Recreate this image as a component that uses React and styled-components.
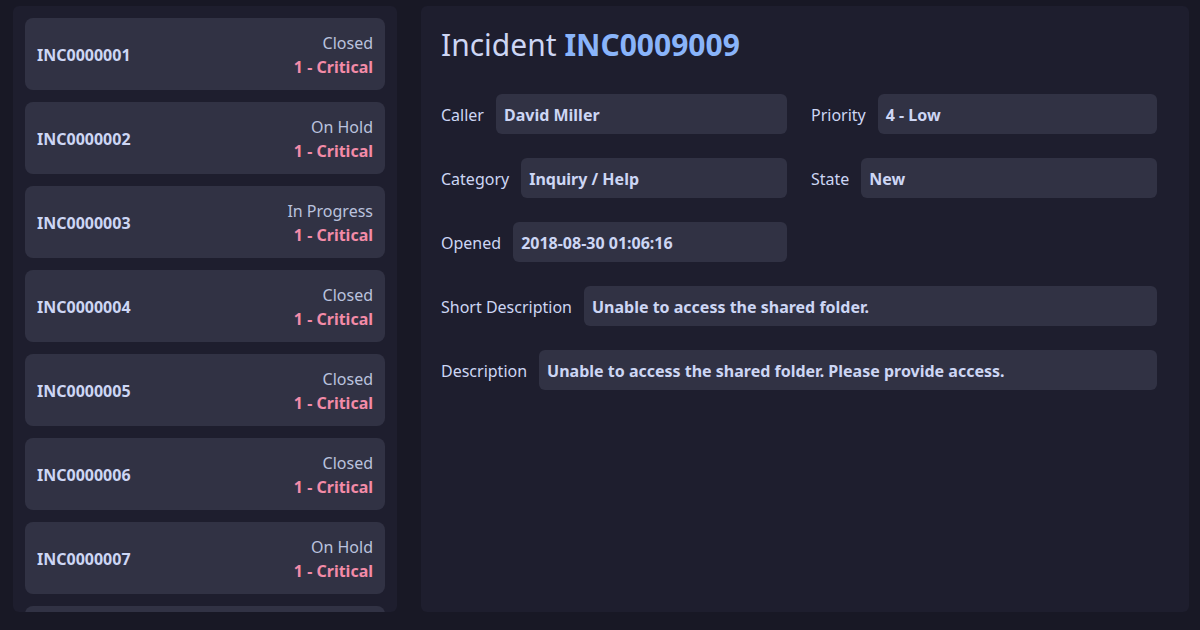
import React from "react";
import styled, { createGlobalStyle } from "styled-components";

const GlobalStyle = createGlobalStyle`
  * { box-sizing: border-box; }
  html, body {
    margin: 0;
    padding: 0;
    background: #181825;
    color: #cdd6f4;
    font-family: "Noto Sans", "Open Sans", sans-serif;
    font-size: 16px;
  }
`;

const Layout = styled.div`
  height: 630px;
  padding: 6px 11px 18px 13px;
  display: grid;
  grid-template-columns: 384px 1fr;
  gap: 24px;
`;

const ListPanel = styled.div`
  background: #1e1e2e;
  border-radius: 6px;
  padding: 12px;
  display: flex;
  flex-direction: column;
  gap: 12px;
  overflow: hidden;
`;

const Card = styled.div`
  flex: none;
  height: 72px;
  background: #313244;
  border-radius: 8px;
  padding: 13px 12px 11px;
  display: flex;
  align-items: center;
  justify-content: space-between;
  line-height: 24px;
`;

const CardId = styled.div`
  font-weight: 700;
  color: #cdd6f4;
`;

const CardMeta = styled.div`
  display: flex;
  flex-direction: column;
  align-items: flex-end;
`;

const Status = styled.span`
  color: #bac2de;
`;

const Priority = styled.span`
  color: #f38ba8;
  font-weight: 700;
`;

const DetailPanel = styled.div`
  background: #1e1e2e;
  border-radius: 6px;
  padding: 20px 32px 20px 20px;
`;

const Title = styled.h1`
  margin: 0 0 30px;
  font-size: 30px;
  line-height: 38px;
  font-weight: 400;
  color: #cdd6f4;
`;

const TitleId = styled.span`
  font-weight: 700;
  color: #89b4fa;
`;

const Form = styled.div`
  display: grid;
  grid-template-columns: 1fr 1fr;
  column-gap: 24px;
  row-gap: 24px;
`;

const Field = styled.div`
  display: flex;
  align-items: center;
  gap: 12px;
  grid-column: ${(p) => (p.wide ? "1 / -1" : "auto")};
`;

const Label = styled.span`
  flex: none;
  padding-top: 2px;
  color: #cdd6f4;
`;

const Value = styled.div`
  flex: 1;
  height: 40px;
  display: flex;
  align-items: center;
  padding: 2px 8px 0;
  background: #313244;
  border-radius: 6px;
  font-weight: 700;
  color: #cdd6f4;
`;

const incidents = [
  { id: "INC0000001", state: "Closed" },
  { id: "INC0000002", state: "On Hold" },
  { id: "INC0000003", state: "In Progress" },
  { id: "INC0000004", state: "Closed" },
  { id: "INC0000005", state: "Closed" },
  { id: "INC0000006", state: "Closed" },
  { id: "INC0000007", state: "On Hold" },
  { id: "INC0000008", state: "Closed" },
];

export default function App() {
  return (
    <>
      <GlobalStyle />
      <Layout>
        <ListPanel>
          {incidents.map((inc) => (
            <Card key={inc.id}>
              <CardId>{inc.id}</CardId>
              <CardMeta>
                <Status>{inc.state}</Status>
                <Priority>1 - Critical</Priority>
              </CardMeta>
            </Card>
          ))}
        </ListPanel>
        <DetailPanel>
          <Title>
            Incident <TitleId>INC0009009</TitleId>
          </Title>
          <Form>
            <Field>
              <Label>Caller</Label>
              <Value>David Miller</Value>
            </Field>
            <Field>
              <Label>Priority</Label>
              <Value>4 - Low</Value>
            </Field>
            <Field>
              <Label>Category</Label>
              <Value>Inquiry / Help</Value>
            </Field>
            <Field>
              <Label>State</Label>
              <Value>New</Value>
            </Field>
            <Field>
              <Label>Opened</Label>
              <Value>2018-08-30 01:06:16</Value>
            </Field>
            <div />
            <Field wide>
              <Label>Short Description</Label>
              <Value>Unable to access the shared folder.</Value>
            </Field>
            <Field wide>
              <Label>Description</Label>
              <Value>Unable to access the shared folder. Please provide access.</Value>
            </Field>
          </Form>
        </DetailPanel>
      </Layout>
    </>
  );
}
